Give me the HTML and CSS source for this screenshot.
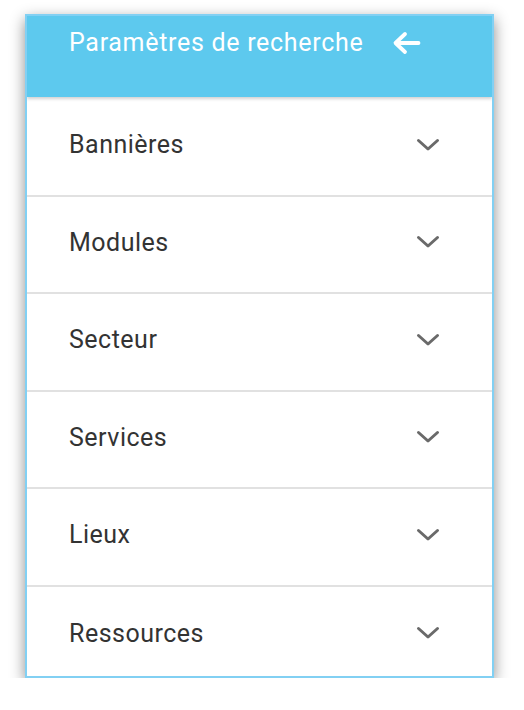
FILE: index.html
```html
<!DOCTYPE html>
<html lang="fr">
<head>
<meta charset="utf-8">
<title>Paramètres de recherche</title>
<link rel="stylesheet" href="styles.css">
</head>
<body>
<div class="panel">
  <div class="header">
    <span class="title">Paramètres de recherche</span>
    <svg class="back" width="30" height="26" viewBox="0 0 30 26" aria-hidden="true">
      <path d="M27.5 13 H5 M14 4 L4.5 13 L14 22" fill="none" stroke="#fff" stroke-width="3.8" stroke-linecap="round" stroke-linejoin="round"/>
    </svg>
  </div>
  <div class="list">
    <div class="row"><span class="label">Bannières</span><svg class="chev" width="24" height="14" viewBox="0 0 24 14"><path d="M2.5 2.5 L12 11 L21.5 2.5" fill="none" stroke="#6a6a6a" stroke-width="3" stroke-linecap="round" stroke-linejoin="round"/></svg></div>
    <div class="row"><span class="label">Modules</span><svg class="chev" width="24" height="14" viewBox="0 0 24 14"><path d="M2.5 2.5 L12 11 L21.5 2.5" fill="none" stroke="#6a6a6a" stroke-width="3" stroke-linecap="round" stroke-linejoin="round"/></svg></div>
    <div class="row"><span class="label">Secteur</span><svg class="chev" width="24" height="14" viewBox="0 0 24 14"><path d="M2.5 2.5 L12 11 L21.5 2.5" fill="none" stroke="#6a6a6a" stroke-width="3" stroke-linecap="round" stroke-linejoin="round"/></svg></div>
    <div class="row"><span class="label">Services</span><svg class="chev" width="24" height="14" viewBox="0 0 24 14"><path d="M2.5 2.5 L12 11 L21.5 2.5" fill="none" stroke="#6a6a6a" stroke-width="3" stroke-linecap="round" stroke-linejoin="round"/></svg></div>
    <div class="row"><span class="label">Lieux</span><svg class="chev" width="24" height="14" viewBox="0 0 24 14"><path d="M2.5 2.5 L12 11 L21.5 2.5" fill="none" stroke="#6a6a6a" stroke-width="3" stroke-linecap="round" stroke-linejoin="round"/></svg></div>
    <div class="row last"><span class="label">Ressources</span><svg class="chev" width="24" height="14" viewBox="0 0 24 14"><path d="M2.5 2.5 L12 11 L21.5 2.5" fill="none" stroke="#6a6a6a" stroke-width="3" stroke-linecap="round" stroke-linejoin="round"/></svg></div>
  </div>
</div>
</body>
</html>
```
FILE: styles.css
```css
html, body {
  margin: 0;
  padding: 0;
  background: #ffffff;
}
body {
  font-family: Roboto, "Liberation Sans", Arial, sans-serif;
  padding: 14px 0 0 25px;
}
.panel {
  box-sizing: border-box;
  width: 469px;
  height: 664px;
  border: 2px solid #82d0f3;
  background: #ffffff;
  box-shadow: 0 5px 14px rgba(0, 0, 0, 0.45);
  overflow: hidden;
  display: flex;
  flex-direction: column;
}
.header {
  position: relative;
  z-index: 1;
  height: 81px;
  flex: none;
  background: #5dc9ee;
  box-shadow: 0 2px 3px rgba(0, 0, 0, 0.18);
  display: flex;
  align-items: flex-start;
  padding: 12px 0 0 42px;
  box-sizing: border-box;
}
.title {
  color: #ffffff;
  font-size: 25px;
  line-height: 30px;
  letter-spacing: 0.7px;
}
.back {
  margin-left: 28px;
  margin-top: 2px;
}
.list {
  padding-top: 2px;
}
.row {
  box-sizing: border-box;
  height: 97.5px;
  border-bottom: 2px solid #e1e1e1;
  display: flex;
  align-items: center;
  justify-content: space-between;
  padding: 0 52px 4px 42px;
}
.row.last {
  border-bottom: none;
}
.label {
  font-size: 25px;
  letter-spacing: 0.5px;
  color: #333333;
}
.chev {
  display: block;
}
```
